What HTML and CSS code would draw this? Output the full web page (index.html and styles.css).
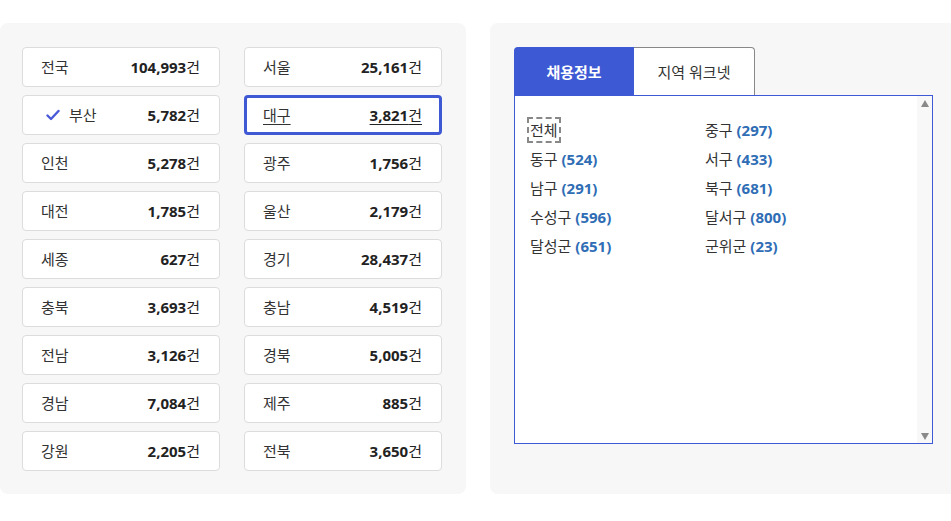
FILE: index.html
```html
<!DOCTYPE html>
<html lang="ko">
<head>
    <meta charset="UTF-8">
    <title>지역별 채용정보</title>
    <link rel="stylesheet" href="styles.css">
</head>
<body>
    <div class="wrap">
        <div class="panel regions">
            <a class="region"><span class="name">전국</span><span class="count"><b>104,993</b>건</span></a>
            <a class="region"><span class="name">서울</span><span class="count"><b>25,161</b>건</span></a>
            <a class="region checked"><span class="name"><svg class="check" viewBox="0 0 14 12" width="14" height="12"><path d="M1.5 6.5 L5 10 L12.5 2" fill="none" stroke="#4a5ad8" stroke-width="2.4" stroke-linecap="round" stroke-linejoin="round"/></svg>부산</span><span class="count"><b>5,782</b>건</span></a>
            <a class="region active"><span class="name">대구</span><span class="count"><b>3,821</b>건</span></a>
            <a class="region"><span class="name">인천</span><span class="count"><b>5,278</b>건</span></a>
            <a class="region"><span class="name">광주</span><span class="count"><b>1,756</b>건</span></a>
            <a class="region"><span class="name">대전</span><span class="count"><b>1,785</b>건</span></a>
            <a class="region"><span class="name">울산</span><span class="count"><b>2,179</b>건</span></a>
            <a class="region"><span class="name">세종</span><span class="count"><b>627</b>건</span></a>
            <a class="region"><span class="name">경기</span><span class="count"><b>28,437</b>건</span></a>
            <a class="region"><span class="name">충북</span><span class="count"><b>3,693</b>건</span></a>
            <a class="region"><span class="name">충남</span><span class="count"><b>4,519</b>건</span></a>
            <a class="region"><span class="name">전남</span><span class="count"><b>3,126</b>건</span></a>
            <a class="region"><span class="name">경북</span><span class="count"><b>5,005</b>건</span></a>
            <a class="region"><span class="name">경남</span><span class="count"><b>7,084</b>건</span></a>
            <a class="region"><span class="name">제주</span><span class="count"><b>885</b>건</span></a>
            <a class="region"><span class="name">강원</span><span class="count"><b>2,205</b>건</span></a>
            <a class="region"><span class="name">전북</span><span class="count"><b>3,650</b>건</span></a>
        </div>

        <div class="panel detail">
            <div class="tabs">
                <a class="tab on">채용정보</a>
                <a class="tab">지역 워크넷</a>
            </div>
            <div class="listbox">
                <ul class="districts">
                    <li><span class="focus">전체</span></li>
                    <li>중구 <b>(297)</b></li>
                    <li>동구 <b>(524)</b></li>
                    <li>서구 <b>(433)</b></li>
                    <li>남구 <b>(291)</b></li>
                    <li>북구 <b>(681)</b></li>
                    <li>수성구 <b>(596)</b></li>
                    <li>달서구 <b>(800)</b></li>
                    <li>달성군 <b>(651)</b></li>
                    <li>군위군 <b>(23)</b></li>
                </ul>
                <div class="scrollbar">
                    <span class="arrow up"></span>
                    <span class="arrow down"></span>
                </div>
            </div>
        </div>
    </div>
</body>
</html>
```

FILE: styles.css
```css
* {
    margin: 0;
    padding: 0;
    box-sizing: border-box;
}

body {
    background: #fff;
    font-family: "Noto Sans", "Noto Sans CJK KR", sans-serif;
    font-size: 15px;
    color: #333;
    overflow: hidden;
}

.wrap {
    display: flex;
    gap: 24px;
    padding-top: 23px;
}

.panel {
    flex-shrink: 0;
    background: #f7f7f7;
    border-radius: 8px;
    height: 471px;
}

.regions {
    width: 466px;
    padding: 24px 24px 24px 22px;
    display: grid;
    grid-template-columns: 198px 198px;
    grid-auto-rows: 40px;
    column-gap: 24px;
    row-gap: 8px;
}

.region {
    display: flex;
    align-items: center;
    justify-content: space-between;
    padding: 0 19px 0 18px;
    background: #fff;
    border: 1px solid #dcdcdc;
    border-radius: 4px;
    color: #333;
    line-height: 20px;
    cursor: pointer;
}

.region .name {
    display: flex;
    align-items: center;
}

.region .count {
    color: #222;
}

.region .count b {
    font-weight: 700;
}

.check {
    margin: 0 9px 0 5px;
}

.region.active {
    border: 3px solid #3f58d4;
    padding: 0 17px 0 16px;
}

.region.active .name,
.region.active .count {
    text-decoration: underline;
    text-underline-offset: 3px;
}

.detail {
    width: 480px;
    padding: 24px 18px 0 24px;
    border-radius: 8px 0 0 8px;
}

.tabs {
    display: flex;
    height: 48px;
}

.tab {
    width: 121px;
    display: flex;
    align-items: center;
    justify-content: center;
    background: #fff;
    border: 1px solid #888;
    border-left: none;
    border-bottom: none;
    border-radius: 0 4px 0 0;
    color: #333;
    cursor: pointer;
}

.tab.on {
    width: 120px;
    background: #3d59d4;
    border: none;
    border-radius: 4px 0 0 0;
    color: #fff;
    font-weight: 700;
}

.listbox {
    width: 419px;
    height: 349px;
    display: flex;
    background: #fff;
    border: 1px solid #3d59d4;
}

.districts {
    flex: 1;
    list-style: none;
    display: grid;
    grid-template-columns: 175px 175px;
    grid-auto-rows: 29px;
    align-content: start;
    padding: 20px 0 0 15px;
}

.districts li {
    line-height: 29px;
    color: #333;
}

.districts b {
    color: #2f6db5;
    font-weight: 700;
}

.focus {
    outline: 2px dashed #888;
    outline-offset: 1px;
}

.scrollbar {
    width: 15px;
    background: #f8f8f8;
    display: flex;
    flex-direction: column;
    justify-content: space-between;
    align-items: center;
    padding: 4px 0 3px;
}

.arrow {
    width: 0;
    height: 0;
    border-left: 4px solid transparent;
    border-right: 4px solid transparent;
}

.arrow.up {
    border-bottom: 7px solid #8a8a8a;
}

.arrow.down {
    border-top: 7px solid #8a8a8a;
}
```
